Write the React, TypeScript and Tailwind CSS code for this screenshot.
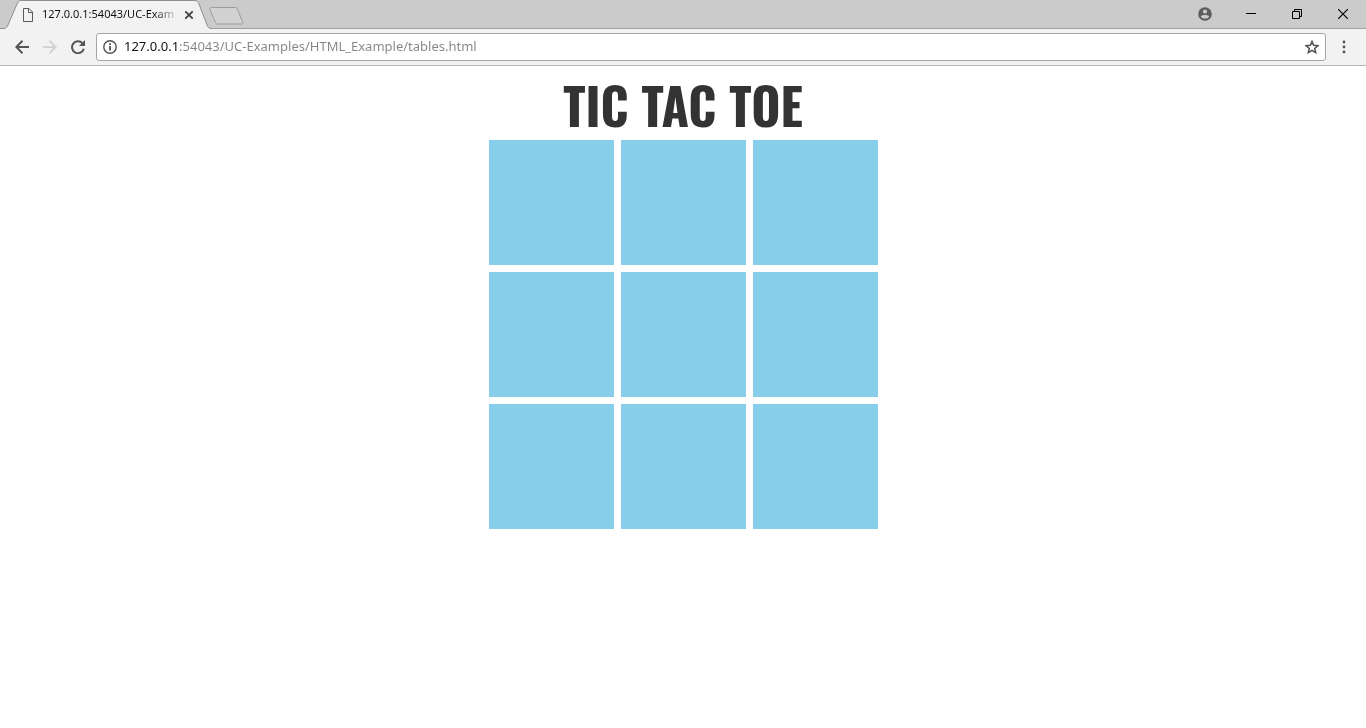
const rows = [0, 1, 2];
const columns = [0, 1, 2];

function TabStrip() {
  return (
    <header className="flex h-7 items-start bg-[#cbcbcb]">
      <div className="relative h-[29px] w-[212px] shrink-0">
        <svg className="absolute inset-0" width="212" height="29" viewBox="0 0 212 29" aria-hidden="true">
          <path d="M0 29V28.500H4C6 28.500 7 27 8 25L17 4C18.500 1 19 .5 21 .5H194C197 .5 198 1.500 199 4L207 25C208 27.500 209 28.500 212 28.500V29Z" fill="#f2f2f2" />
          <path d="M0 28.500H4C6 28.500 7 27 8 25L17 4C18.500 1 19 .5 21 .5H194C197 .5 198 1.500 199 4L207 25C208 27.500 209 28.500 212 28.500" fill="none" stroke="#8f8f8f" />
        </svg>
        <div className="relative flex h-[29px] items-center pl-[22px]">
          <svg width="12" height="14" viewBox="0 0 12 14" fill="none" stroke="#5a5a5a" aria-hidden="true">
            <path d="M1.500 .5H7L10.500 4V13.500H1.500ZM6.500 .5V4.500H10.500" />
          </svg>
          <span className="ml-2 w-[136px] bg-[linear-gradient(90deg,#111_112px,transparent_138px)] bg-clip-text font-['Noto_Sans','Open_Sans',sans-serif] text-[11px] whitespace-nowrap text-transparent">
            127.0.0.1:54043/UC-Exam
          </span>
          <button aria-label="Close tab" className="ml-[6px] flex h-4 w-[10px] items-center justify-center">
            <svg width="10" height="10" viewBox="0 0 10 10" stroke="#404040" strokeWidth="1.800">
              <path d="M1.300 1.300L8.700 8.700M8.700 1.300L1.300 8.700" />
            </svg>
          </button>
        </div>
      </div>
      <button aria-label="New tab" className="mt-[7px] -ml-1">
        <svg width="36" height="18" viewBox="0 0 36 18" fill="#d2d2d2" stroke="#9c9c9c">
          <path d="M3.500 .5H27C28.500 .5 29 1 29.500 2L34.500 15C35 16.500 34.500 17 33.500 17H10C8.500 17 8 16.500 7.500 15.500L2 3C1.500 1.500 2 .5 3.500 .5Z" />
        </svg>
      </button>
      <div className="ml-auto flex h-[27px] items-center">
        <button aria-label="Profile" className="flex h-full w-[46px] items-center justify-center">
          <svg width="14" height="14" viewBox="0 0 14 14">
            <circle cx="7" cy="7" r="6.800" fill="#5d5d5d" />
            <circle cx="7" cy="4.600" r="2.100" fill="#cbcbcb" />
            <path d="M2.800 9.400C3.300 7.400 10.700 7.400 11.200 9.400C9.500 12.300 4.500 12.300 2.800 9.400Z" fill="#cbcbcb" />
          </svg>
        </button>
        <button aria-label="Minimize" className="flex h-full w-[46px] items-center justify-center">
          <svg width="10" height="10" viewBox="0 0 10 10" stroke="#000"><path d="M0 4.500H10" /></svg>
        </button>
        <button aria-label="Restore" className="flex h-full w-[46px] items-center justify-center">
          <svg width="10" height="10" viewBox="0 0 10 10" fill="none" stroke="#000">
            <path d="M.5 2.500H7.500V9.500H.5ZM2.500 2.500V.5H9.500V7.500H7.500" />
          </svg>
        </button>
        <button aria-label="Close window" className="flex h-full w-[46px] items-center justify-center">
          <svg width="10" height="10" viewBox="0 0 10 10" stroke="#000" strokeWidth="1.200">
            <path d="M0 0L10 10M10 0L0 10" />
          </svg>
        </button>
      </div>
    </header>
  );
}

function Toolbar() {
  return (
    <nav className="flex h-[38px] items-center border-t border-b border-t-[#a0a0a0] border-b-[#b6b6b6] bg-[#f2f2f2] pr-1 pl-2">
      <button aria-label="Back" className="flex size-7 items-center justify-center">
        <svg width="14" height="14" viewBox="0 0 14 14" fill="none" stroke="#555" strokeWidth="2">
          <path d="M14 7H1.500M7.500 .8L1.300 7L7.500 13.200" />
        </svg>
      </button>
      <button aria-label="Forward" disabled className="flex size-7 items-center justify-center">
        <svg width="14" height="14" viewBox="0 0 14 14" fill="none" stroke="#d2d2d2" strokeWidth="2">
          <path d="M0 7H12.500M6.500 .8L12.700 7L6.500 13.200" />
        </svg>
      </button>
      <button aria-label="Reload" className="flex size-7 items-center justify-center">
        <svg width="14" height="14" viewBox="0 0 14 14">
          <path d="M11.500 3.200A6 6 0 1 0 12.800 8.800" fill="none" stroke="#555" strokeWidth="2" />
          <path d="M14 0V6H8Z" fill="#555" />
        </svg>
      </button>
      <div className="ml-1 flex h-7 flex-1 items-center rounded-[3px] border border-[#a6a6a6] bg-white px-[6px]">
        <svg width="14" height="14" viewBox="0 0 14 14" fill="none" stroke="#505050" aria-hidden="true">
          <circle cx="7" cy="7" r="6.200" strokeWidth="1.400" />
          <path d="M7 6V10.500M7 3.300V5" strokeWidth="1.800" />
        </svg>
        <input
          aria-label="Address"
          defaultValue="127.0.0.1:54043/UC-Examples/HTML_Example/tables.html"
          className="ml-[7px] min-w-0 flex-1 bg-[linear-gradient(90deg,#111_54px,#858585_54px)] bg-clip-text font-['Noto_Sans','Open_Sans',sans-serif] text-[13px] text-transparent outline-none"
        />
        <button aria-label="Bookmark this page">
          <svg width="14" height="14" viewBox="0 0 14 14" fill="none" stroke="#505050" strokeWidth="1.500">
            <path d="M7 1.500L8.600 5.200L12.900 5.600L9.700 8.400L10.700 12.600L7 10.400L3.300 12.600L4.300 8.400L1.100 5.600L5.400 5.200Z" />
          </svg>
        </button>
      </div>
      <button aria-label="Menu" className="flex h-7 w-9 items-center justify-center">
        <svg width="4" height="14" viewBox="0 0 4 14" fill="#555">
          <circle cx="2" cy="2" r="1.400" />
          <circle cx="2" cy="7" r="1.400" />
          <circle cx="2" cy="12" r="1.400" />
        </svg>
      </button>
    </nav>
  );
}

export default function App() {
  return (
    <div className="min-h-screen bg-white">
      <TabStrip />
      <Toolbar />
      <main className="flex flex-col items-center pt-2">
        <h1 className="font-['Oswald',sans-serif] text-[50px] leading-[60px] font-bold whitespace-nowrap text-[#333]">
          TIC TAC TOE
        </h1>
        <table aria-label="Tic tac toe board" className="-mt-px border-separate border-spacing-[7px]">
          <tbody>
            {rows.map((row) => (
              <tr key={row}>
                {columns.map((column) => (
                  <td key={column} className="size-[125px] bg-[#87ceeb] p-0" />
                ))}
              </tr>
            ))}
          </tbody>
        </table>
      </main>
    </div>
  );
}
